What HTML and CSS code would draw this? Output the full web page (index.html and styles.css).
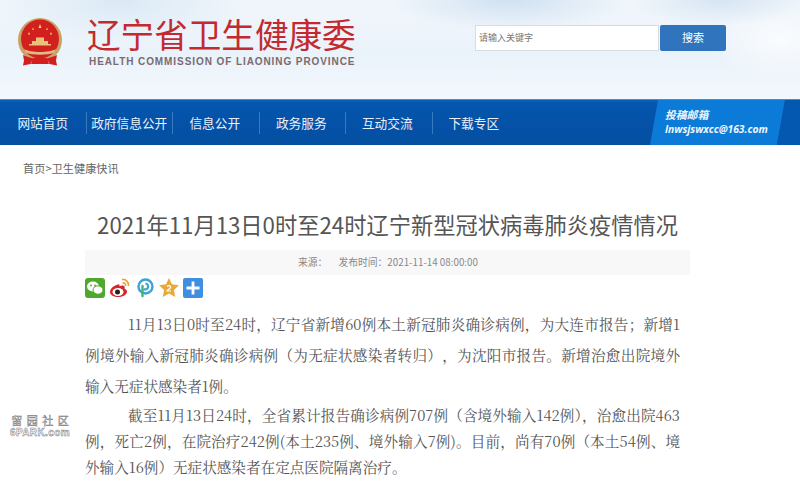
FILE: index.html
```html
<!DOCTYPE html>
<html lang="zh-CN">
<head>
<meta charset="utf-8">
<title>辽宁省卫生健康委</title>
<link rel="stylesheet" href="styles.css">
</head>
<body>
<header class="masthead">
  <svg class="emblem" width="46" height="50" viewBox="0 0 46 50" aria-hidden="true">
    <ellipse cx="23" cy="22" rx="22" ry="22" fill="#c9a266"/>
    <ellipse cx="23" cy="21" rx="19" ry="19.500" fill="#d2201f"/>
    <path d="M23 6l1.600 4h-3.200zM12 14l1.200 2.600h-2.400zM34 14l1.200 2.600h-2.400zM16 9.500l1 2.200h-2zM30 9.500l1 2.200h-2z" fill="#f3cf63"/>
    <path d="M12 26h22v1.500H12zM15 23h16v3H15zM19 19.500h8V23h-8z" fill="#e6c27a"/>
    <path d="M7 31c6 4 26 4 32 0l-1.500 3.500c-7 3-22 3-29 0z" fill="#dcbd85"/>
    <path d="M6 37c3 1.500 7 2.500 10 3.500l-2.500 5.500-7.500 1.500 1-5zM40 37c-3 1.500-7 2.500-10 3.500l2.500 5.500 7.500 1.500-1-5zM16 40h14l2 6H14z" fill="#d2201f"/>
  </svg>
  <div class="brand">
    <div class="brand-cn">辽宁省卫生健康委</div>
    <div class="brand-en">HEALTH COMMISSION OF LIAONING PROVINCE</div>
  </div>
  <form class="search">
    <div class="search-input">请输入关键字</div>
    <div class="search-btn">搜索</div>
  </form>
</header>

<nav class="nav">
  <a class="nav-item">网站首页</a>
  <a class="nav-item">政府信息公开</a>
  <a class="nav-item">信息公开</a>
  <a class="nav-item">政务服务</a>
  <a class="nav-item">互动交流</a>
  <a class="nav-item">下载专区</a>
  <div class="mail">
    <div class="mail-bg"></div>
    <div class="mail-tail"></div>
    <div class="mail-text">
      <div class="mail-title">投稿邮箱</div>
      <div class="mail-addr">lnwsjswxcc@163.com</div>
    </div>
  </div>
</nav>

<div class="crumb">首页&gt;卫生健康快讯</div>

<main class="article">
  <h1 class="title">2021年11月13日0时至24时辽宁新型冠状病毒肺炎疫情情况</h1>
  <div class="meta"><span class="meta-source">来源：</span><span>发布时间：2021-11-14 08:00:00</span></div>
  <div class="share">
    <svg width="20" height="20" viewBox="0 0 20 20" aria-hidden="true"><rect width="20" height="20" rx="3" fill="#4fa82e"/><ellipse cx="8" cy="8.500" rx="6" ry="5" fill="#fff"/><ellipse cx="13" cy="12" rx="5" ry="4.200" fill="#fff" stroke="#4fa82e"/><circle cx="6" cy="7.500" r=".9" fill="#4fa82e"/><circle cx="10" cy="7.500" r=".9" fill="#4fa82e"/></svg>
    <svg width="22" height="20" viewBox="0 0 22 20" aria-hidden="true"><path d="M9 6.500C4.500 7.500 1 11 1 14c0 3 4 5 8.500 5s8.500-2.500 8.500-5.500c0-2-2-2.500-2.500-3 .8-2-.2-3-2-3-1 0-2 .5-3 .8.200-1.500-.3-2.300-1.500-1.800z" fill="#d8232a"/><ellipse cx="9" cy="14" rx="5.500" ry="4" fill="#fff"/><circle cx="8.500" cy="14" r="2.500" fill="#222"/><path d="M13 1.500c4-.5 7 2.500 6.500 6.500M13.500 4.800c2-.2 3.300 1 3 3" fill="none" stroke="#e8a33a" stroke-width="1.700"/></svg>
    <svg width="20" height="20" viewBox="0 0 20 20" aria-hidden="true"><circle cx="10.500" cy="8.500" r="7" fill="none" stroke="#3aa3d8" stroke-width="2.400"/><path d="M10.500 5.500a3 3 0 1 1-2 5.500" fill="none" stroke="#3aa3d8" stroke-width="2.200"/><path d="M7.500 8v10" stroke="#49b07a" stroke-width="2.400" stroke-linecap="round"/></svg>
    <svg width="20" height="20" viewBox="0 0 20 20" aria-hidden="true"><path d="M10 0l3 6.300 6.900.9-5 4.800 1.300 6.900L10 15.600l-6.200 3.300L5.100 12l-5-4.800 6.900-.9z" fill="#e8a93a"/><path d="M8 8.500c1-1.500 4-1 3.500 1-.4 1.500-3 2-3.500 3.500h4" fill="none" stroke="#fff" stroke-width="1.200"/></svg>
    <svg width="20" height="20" viewBox="0 0 20 20" aria-hidden="true"><rect width="20" height="20" rx="2" fill="#3f8fe0"/><path d="M10 3.500v13M3.500 10h13" stroke="#fff" stroke-width="2.800"/></svg>
  </div>
  <div class="body">
    <p class="para para-a">11月13日0时至24时，辽宁省新增60例本土新冠肺炎确诊病例，为大连市报告；新增1例境外输入新冠肺炎确诊病例（为无症状感染者转归），为沈阳市报告。新增治愈出院境外输入无症状感染者1例。</p>
    <p class="para para-b">截至11月13日24时，全省累计报告确诊病例707例（含境外输入142例），治愈出院463例，死亡2例，在院治疗242例(本土235例、境外输入7例)。目前，尚有70例（本土54例、境外输入16例）无症状感染者在定点医院隔离治疗。</p>
  </div>
</main>

<div class="watermark">
  <div class="wm-cn">留 园 社 区</div>
  <div class="wm-en">6PARK.com</div>
</div>
</body>
</html>
```

FILE: styles.css
```css
* { box-sizing: border-box; }
html, body { margin: 0; padding: 0; }
body {
  position: relative;
  width: 800px;
  height: 487px;
  overflow: hidden;
  background: #fff;
  font-family: "Noto Sans CJK SC", "Liberation Sans", sans-serif;
  color: #444;
}
.masthead {
  height: 99px;
  display: flex;
  align-items: flex-start;
  padding: 18px 0 0 17px;
  background:
    radial-gradient(ellipse 130px 40px at 120px 2px, #dbe9f5 0%, rgba(219,233,245,0) 100%),
    radial-gradient(ellipse 120px 30px at 510px 0, #cfe1f2 0%, rgba(207,225,242,0) 100%),
    radial-gradient(ellipse 90px 26px at 720px 0, #d6e5f3 0%, rgba(214,229,243,0) 100%),
    radial-gradient(ellipse 70px 40px at 780px 40px, #fafcfe 0%, rgba(250,252,254,0) 100%),
    linear-gradient(#f1f6fb, #eaf2fa 55%, #f3f8fc);
}
.emblem { flex: none; }
.brand { width: 272px; margin-left: 24px; }
.brand-cn {
  font-family: "Liberation Sans", "Noto Sans CJK SC", sans-serif;
  font-size: 33.6px;
  line-height: 37.4px;
  color: #c32a30;
  white-space: nowrap;
}
.brand-en {
  font-family: "Liberation Sans", sans-serif;
  font-weight: 700;
  font-size: 10px;
  line-height: 12px;
  letter-spacing: .92px;
  margin: .6px 0 0 2px;
  color: #7a6a70;
  white-space: nowrap;
}
.search { display: flex; gap: 1px; margin: 7px 0 0 116px; }
.search-input {
  width: 184px;
  height: 26px;
  padding-left: 3px;
  border: 1px solid #d9dde3;
  background: #fff;
  font-size: 9px;
  line-height: 24px;
  color: #777;
}
.search-btn {
  width: 66px;
  height: 26px;
  border-radius: 2px;
  background: #2f74bd;
  color: #fff;
  font-family: "Liberation Serif", "Noto Sans CJK SC", serif;
  font-size: 11px;
  line-height: 26px;
  text-align: center;
}
.nav {
  position: relative;
  height: 46px;
  display: flex;
  align-items: center;
  padding-top: 1px;
  background: linear-gradient(#0b62bd 0, #0556ad 3px, #0450a6 70%, #04509f);
  border-top: 1px solid #3c8fd8;
}
.nav-item {
  width: 86.5px;
  height: 22px;
  line-height: 22px;
  text-align: center;
  font-size: 12.7px;
  color: #e8f0f8;
  border-left: 1px solid rgba(120,170,220,.45);
  white-space: nowrap;
}
.nav-item:first-child { border-left: 0; width: 85.5px; }
.nav-item:nth-child(n+3) { text-indent: -2px; }
.nav-item:nth-child(n+5) { text-indent: -3px; }
.mail { position: absolute; left: 650px; top: 0; bottom: 0; width: 150px; }
.mail-bg {
  position: absolute; left: 0; top: 0; width: 135px; height: 100%;
  background: #0c7bd8;
  clip-path: polygon(8px 0, 100% 0, 127px 100%, 0 100%);
}
.mail-tail {
  position: absolute; left: 127px; top: 0; right: 0; height: 100%;
  background: #0458b0;
  clip-path: polygon(8px 0, 100% 0, 100% 100%, 0 100%);
}
.mail-text {
  position: absolute; left: 15px; top: 6px;
  color: #eef6fd;
  font-style: italic;
  font-weight: 700;
  white-space: nowrap;
}
.mail-title { font-size: 10.800px; line-height: 16px; }
.mail-addr { font-family: "Open Sans", "Liberation Sans", sans-serif; font-size: 10.300px; line-height: 14px; }
.crumb {
  padding: 14px 0 0 23px;
  font-size: 11.200px;
  line-height: 18px;
  color: #666;
}
.article { padding: 0 120px 0 85px; width: 800px; }
.title {
  margin: 29px 0 0;
  width: 605px;
  font-size: 22.250px;
  font-weight: 400;
  line-height: 36px;
  text-align: center;
  color: #555;
  white-space: nowrap;
}
.meta {
  width: 605px;
  height: 25px;
  margin-top: 8px;
  padding-left: 213px;
  background: #f8f8f9;
  font-size: 9.800px;
  line-height: 25px;
  color: #888;
  white-space: nowrap;
}
.meta-source { margin-right: 11px; }
.share { display: flex; gap: 4px; align-items: center; height: 20px; margin-top: 3px; }
.body { width: 595px; margin-top: 10px; }
.para { margin: 0; text-indent: 43px; font-family: "Noto Serif CJK SC", "Noto Sans CJK SC", serif; font-size: 14.600px; color: #555; text-align: justify; }
.para-a { line-height: 31px; text-spacing-trim: space-all; }
.para-b { line-height: 26px; margin-top: 1px; }
.watermark {
  position: absolute;
  left: 8px;
  top: 412px;
  width: 64px;
  color: #fff;
  text-align: center;
  font-family: "Noto Sans CJK SC", "Liberation Sans", sans-serif;
  -webkit-text-stroke: .5px #777;
}
.wm-cn { font-size: 11px; line-height: 16px; word-spacing: 2px; white-space: nowrap; }
.wm-en { font-family: "Liberation Sans", sans-serif; font-size: 10px; line-height: 10px; font-weight: 700; letter-spacing: .4px; }
```
